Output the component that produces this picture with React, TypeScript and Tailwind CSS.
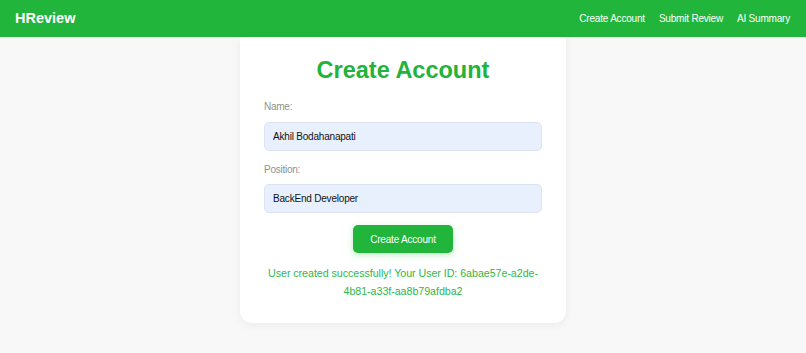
import { useState } from "react";

const navLinks = ["Create Account", "Submit Review", "AI Summary"];

export default function App() {
  const [name, setName] = useState("Akhil Bodahanapati");
  const [position, setPosition] = useState("BackEnd Developer");

  return (
    <div
      className="min-h-[353px] bg-[#f8f8f8]"
      style={{ fontFamily: '"Liberation Sans", Arial, sans-serif' }}
    >
      {/* Top bar */}
      <header className="h-[37px] bg-[#21b53b] flex items-center justify-between pl-[15px] pr-[16px]">
        <span className="text-white font-bold text-[14.5px] leading-none">HReview</span>
        <nav className="flex items-center gap-[14px]">
          {navLinks.map((link) => (
            <a key={link} href="#" className="text-white text-[10px] tracking-[-0.2px] leading-none">
              {link}
            </a>
          ))}
        </nav>
      </header>

      {/* Form card */}
      <div className="w-[326px] mx-auto bg-white rounded-b-xl shadow-[0_2px_10px_rgba(0,0,0,0.06)] px-[24px] pt-[19px] pb-[23px]">
        <h1 className="text-center text-[#21b33a] font-bold text-[23.5px] leading-[28px]">
          Create Account
        </h1>

        <label className="block mt-[17px] mb-[9px] text-[10px] tracking-[-0.25px] leading-[12px] text-[#909090]">
          Name:
        </label>
        <input
          value={name}
          onChange={(e) => setName(e.target.value)}
          className="block w-full h-[29px] px-[8px] rounded-[5px] bg-[#e8f0fe] border border-[#dde4ef] text-[10px] tracking-[-0.2px] text-[#111] outline-none"
        />

        <label className="block mt-[13px] mb-[8px] text-[10px] tracking-[-0.25px] leading-[12px] text-[#909090]">
          Position:
        </label>
        <input
          value={position}
          onChange={(e) => setPosition(e.target.value)}
          className="block w-full h-[29px] px-[8px] rounded-[5px] bg-[#e8f0fe] border border-[#dde4ef] text-[10px] tracking-[-0.2px] text-[#111] outline-none"
        />

        <div className="flex justify-center mt-[12px]">
          <button className="w-[100px] h-[28px] rounded-[5px] bg-[#21b53b] text-white text-[10px] tracking-[-0.2px] shadow-[0_2px_6px_rgba(33,181,59,0.3)]">
            Create Account
          </button>
        </div>

        <p className="mt-[11px] text-center text-[10.7px] tracking-[-0.05px] leading-[18px] text-[#2db84a]">
          User created successfully! Your User ID: 6abae57e-a2de-4b81-a33f-aa8b79afdba2
        </p>
      </div>
    </div>
  );
}
